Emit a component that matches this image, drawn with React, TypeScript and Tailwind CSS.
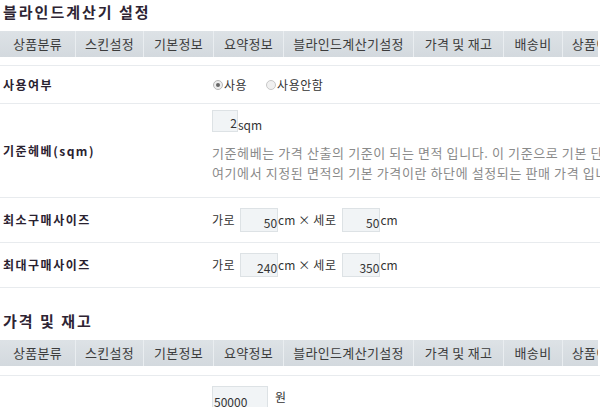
import React from "react";

const tabs = [
  { label: "상품분류", w: "w-[75px]" },
  { label: "스킨설정", w: "w-[68px]" },
  { label: "기본정보", w: "w-[70px]" },
  { label: "요약정보", w: "w-[70px]" },
  { label: "블라인드계산기설정", w: "w-[130px]" },
  { label: "가격 및 재고", w: "w-[90px]" },
  { label: "배송비", w: "w-[59px]" },
  { label: "상품이미지", w: "w-[80px]" },
];

const TabBar = () => {
  return (
    <div className="flex h-[26px] w-[598px] overflow-hidden bg-gradient-to-b from-[#dde2e6] to-[#d3d9de] whitespace-nowrap">
      {tabs.map((t, i) => (
        <div
          key={t.label}
          className={`${t.w} shrink-0 flex items-center justify-center text-[13px] tracking-[0.3px] text-[#3c3c3c] ${i > 0 ? "border-l border-[#e9edf0]" : ""}`}
        >
          {t.label}
        </div>
      ))}
    </div>
  );
};

const Box = ({ value, w = "w-[38px]" }: { value: string; w?: string }) => {
  return (
    <div className={`${w} h-[24px] shrink-0 flex items-end justify-end pb-[2px] bg-[#f1f4f6] border border-[#dde2e5] text-[12px] text-[#333] leading-none`}>
      {value}
    </div>
  );
};

const Row = ({ label, h, children }: { label: string; h: string; children: React.ReactNode }) => {
  return (
    <div className={`flex items-center ${h} border-b border-[#e8ebee]`}>
      <div className="w-[212px] shrink-0 pl-[3px] text-[12px] font-bold text-[#2a2230] tracking-[1.5px]">{label}</div>
      <div className="flex-1 min-w-0">{children}</div>
    </div>
  );
};

export default function App() {
  return (
    <div
      className="w-[600px] h-[407px] overflow-hidden bg-white whitespace-nowrap"
      style={{ fontFamily: '"Noto Sans CJK KR", "Noto Sans", sans-serif' }}
    >
      <h2 className="h-[31px] pl-[3px] pt-[2px] text-[15px] leading-[20px] font-bold text-[#2e2433] tracking-[2px]">블라인드계산기 설정</h2>
      <TabBar />
      <div className="h-[9px] border-b border-[#e8ebee]" />

      <Row label="사용여부" h="h-[38px]">
        <div className="flex items-center text-[12px] text-[#333]">
          <span className="w-[10px] h-[10px] rounded-full border border-[#b8b8b8] bg-[#eeeeee] flex items-center justify-center mr-[1px] ml-[1px]">
            <span className="w-[4px] h-[4px] rounded-full bg-[#666]" />
          </span>
          <span className="tracking-[0.5px]">사용</span>
          <span className="w-[10px] h-[10px] rounded-full border border-[#c8c8c8] bg-[#f0f0f0] ml-[19px] mr-[1px]" />
          <span className="tracking-[0.5px]">사용안함</span>
        </div>
      </Row>

      <Row label="기준헤베(sqm)" h="h-[94px]">
        <div className="flex flex-col">
          <div className="flex items-end h-[22px] mt-[-8px]">
            <div className="w-[26px] h-[22px] flex items-end justify-end bg-[#f1f4f6] border border-[#dde2e5] text-[12px] text-[#333] leading-[16px]">2</div>
            <span className="text-[12px] text-[#333] leading-[14px]">sqm</span>
          </div>
          <div className="mt-[11px] text-[13px] tracking-[0.6px] leading-[20px] text-[#8a8a8a]">
            <p>기준헤베는 가격 산출의 기준이 되는 면적 입니다. 이 기준으로 기본 단가가 결정됩니다.</p>
            <p>여기에서 지정된 면적의 기본 가격이란 하단에 설정되는 판매 가격 입니다.</p>
          </div>
        </div>
      </Row>

      <Row label="최소구매사이즈" h="h-[45px]">
        <div className="flex items-center text-[12px] text-[#333]">
          <span className="mr-[5px] tracking-[0.5px]">가로</span>
          <Box value="50" />
          <span>cm</span>
          <span className="mx-[3px]">×</span>
          <span className="mr-[6px] tracking-[0.5px]">세로</span>
          <Box value="50" />
          <span>cm</span>
        </div>
      </Row>

      <Row label="최대구매사이즈" h="h-[45px]">
        <div className="flex items-center text-[12px] text-[#333]">
          <span className="mr-[5px] tracking-[0.5px]">가로</span>
          <Box value="240" />
          <span>cm</span>
          <span className="mx-[3px]">×</span>
          <span className="mr-[6px] tracking-[0.5px]">세로</span>
          <Box value="350" />
          <span>cm</span>
        </div>
      </Row>

      <h2 className="h-[52px] pl-[3px] pt-[23px] text-[15px] leading-[20px] font-bold text-[#2e2433] tracking-[2px]">가격 및 재고</h2>
      <TabBar />
      <div className="h-[10px] border-b border-[#e8ebee]" />

      <div className="flex pt-[10px]">
        <div className="w-[212px] shrink-0" />
        <div className="flex items-start">
          <div className="w-[56px] h-[24px] flex items-end pl-[1px] bg-[#f1f4f6] border border-[#dde2e5] text-[12px] text-[#333] leading-[14px]">50000</div>
          <span className="ml-[7px] mt-[2px] text-[12px] text-[#333]">원</span>
        </div>
      </div>
    </div>
  );
}
